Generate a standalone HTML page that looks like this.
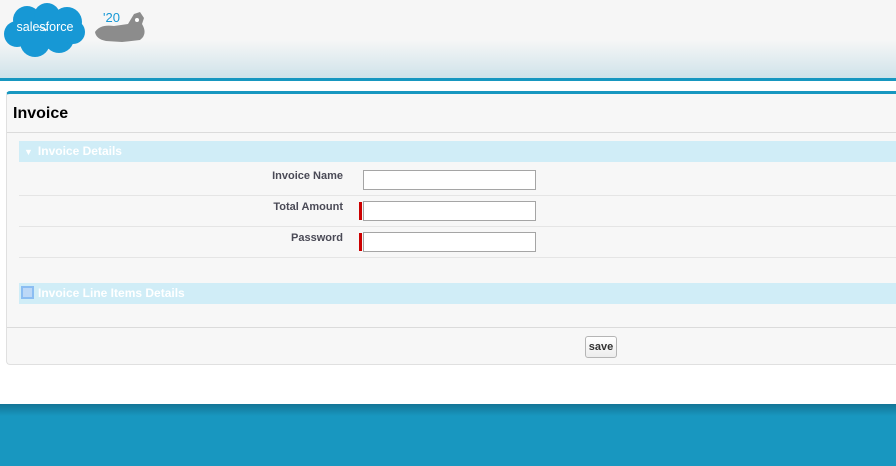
<!DOCTYPE html>
<html><head><style>
body{margin:0;width:896px;height:466px;overflow:hidden;background:#fff;font-family:"Liberation Sans",Arial,sans-serif;position:relative}
.hdr{position:absolute;left:0;top:0;width:896px;height:78px;background:linear-gradient(#f6f6f6 0,#f6f6f6 40px,#cfe3ea 78px)}
.hline{position:absolute;left:0;top:78px;width:896px;height:3px;background:#1797c0}
.panel{position:absolute;left:6px;top:91px;width:900px;height:270px;background:#f7f7f7;border-top:3px solid #1797c0;border-left:1px solid #e0e0e0;border-bottom:1px solid #e0e0e0;border-radius:4px 0 0 4px}
.title{position:absolute;left:6px;top:11px;font-size:16px;font-weight:bold;color:#000}
.sep{position:absolute;left:0;width:900px;height:1px;background:#dbdbdb}
.bar{position:absolute;left:12px;width:890px;height:21px;background:#d0edf7;color:#fff;font-weight:bold;font-size:12px;line-height:21px}
.row{position:absolute;left:12px;width:890px;height:30px;border-bottom:1px solid #e5e5e5}
.lbl{position:absolute;right:566px;top:5px;font-size:11px;font-weight:bold;color:#4a4a56}
.inp{position:absolute;left:344px;top:5px;width:171px;height:18px;border:1px solid #a5a5a5;background:#fff}
.req{position:absolute;left:340px;top:6px;width:3px;height:18px;background:#c00}
.btn{position:absolute;left:578px;top:242px;width:30px;height:20px;border:1px solid #b5b5b5;border-radius:3px;background:linear-gradient(#fff,#ededed);font-size:11px;font-weight:bold;text-align:center;line-height:20px;color:#333}
.foot{position:absolute;left:0;top:404px;width:896px;height:62px;background:linear-gradient(#137596 0,#1897c0 12px)}
</style></head><body>
<div class="hdr">
<svg style="position:absolute;left:3px;top:2px" width="84" height="56" viewBox="0 0 84 56"><g fill="#1798d5"><circle cx="24" cy="18" r="14"/><circle cx="44" cy="14" r="13"/><circle cx="64" cy="20" r="15"/><circle cx="14" cy="32" r="13"/><circle cx="32" cy="40" r="15"/><circle cx="56" cy="36" r="15"/><circle cx="70" cy="30" r="12"/></g><text x="42" y="29" font-family="Liberation Sans" font-size="12.5" fill="#fff" text-anchor="middle">salesforce</text></svg>
<div style="position:absolute;left:103px;top:10px;font-size:13px;color:#1798d5">'20</div>
<svg style="position:absolute;left:92px;top:8px" width="56" height="36"><path d="M3 24 Q8 16 22 18 L36 16 L42 6 L48 4 L52 10 L50 16 Q56 26 48 32 L30 34 L14 33 Q4 31 3 24Z" fill="#8c8c8c"/><circle cx="45" cy="12" r="2" fill="#fff"/></svg>
</div>
<div class="hline"></div>
<div class="panel">
<div class="title">Invoice</div>
<div class="sep" style="top:38px"></div>
<div class="bar" style="top:47px"><span style="font-size:9px;margin:0 5px 0 5px">▼</span>Invoice Details</div>
<div class="row" style="top:71px"><div class="lbl">Invoice Name</div><div class="inp"></div></div>
<div class="row" style="top:102px"><div class="lbl">Total Amount</div><div class="req"></div><div class="inp"></div></div>
<div class="row" style="top:133px"><div class="lbl">Password</div><div class="req"></div><div class="inp"></div></div>
<div class="bar" style="top:189px"><span style="display:inline-block;width:9px;height:9px;border:2px solid #8bbdf2;background:#bcd8f7;vertical-align:-2px;margin:0 4px 0 2px"></span>Invoice Line Items Details</div>
<div class="sep" style="top:233px"></div>
<div class="btn">save</div>
</div>
<div class="foot"></div>
</body></html>
